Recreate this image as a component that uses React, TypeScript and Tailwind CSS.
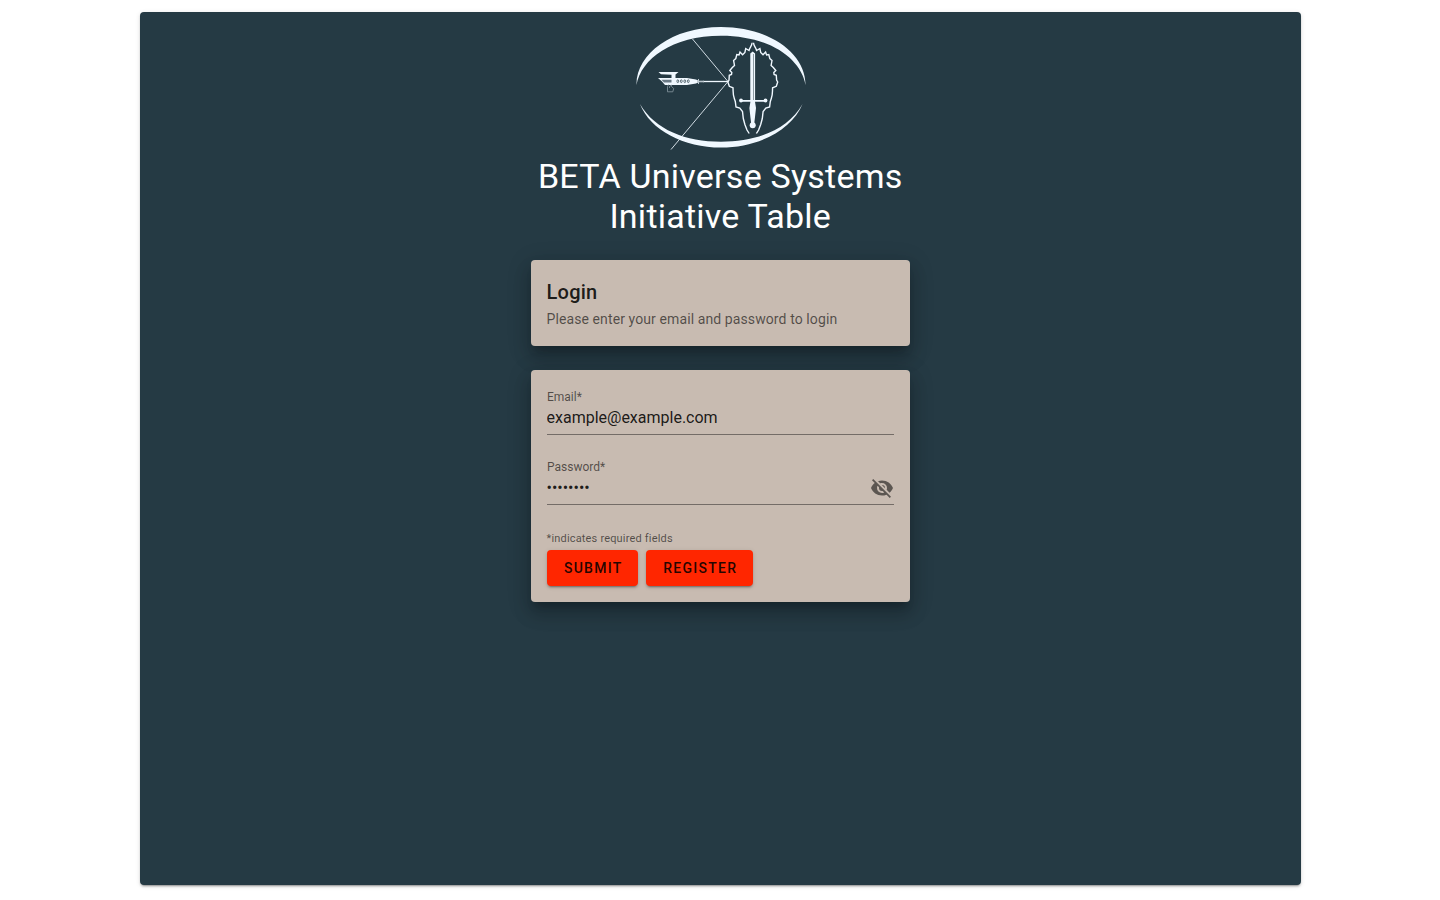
import { useState } from "react";

const flameLeft =
  "M752.1 42.8C751.9 46 750 47 749 50.500L745.700 48.500L744.900 52.500L742.600 54.800L740 52L739 55L736.800 54.500L735.800 58.500L733.600 60.500L734.500 65.500L732.300 67.500L729.800 70.500L731.800 72.500L731.500 74.500L729.300 75.300L729 80L727.900 82L729.300 86.300L733 87.800C733.300 92 732.700 94 734.300 98.500L735.300 101.500L736 107L739.800 108L742.500 111.500L743.300 118.500L744.900 124.500L747 130L749.200 133.500";

function Logo() {
  return (
    <svg className="block h-[128px] w-[172px]" viewBox="635 24 172 128" fill="none">
      <g fill="#f0f8ff">
        <path d="M636.5 85C636 54 672 27 721 27S806 54 805.5 85C801 59 770 35.7 721 35.7S641 59 636.5 85Z" />
        <path d="M640 104C650 130 684 147.6 721 147.6S792 130 802.500 104C788 130 756 141.700 721 141.700S655 130 640 104Z" />
        <path d="M658.500 72.100H678.500L675.500 74.500V78.100H687L696 79.500L700 81.500L696 83.500L687 85H665L662 81.500L658 78H671.500V74.700L661 74.200Z" />
        <path d="M750.300 53.500L752.7 51.500L755.100 53.500V100H766V101.800H755L756 108L754.900 118L754.300 123H751.100L750.500 118L749.400 108L750.400 101.800H740V100H750.300Z" />
        <circle cx="741" cy="100.500" r="1.900" />
        <circle cx="765.500" cy="100.500" r="1.900" />
        <circle cx="752.700" cy="125.300" r="3" />
      </g>
      <path d="M661.500 79.700H671.500V82.400H664Z" fill="#697985" />
      <path d="M753.500 54V100" stroke="#82919a" strokeWidth="0.900" />
      <path d="M703 81.500H728" stroke="#f0f8ff" strokeWidth="1.300" />
      <path d="M698.500 79V84" stroke="#bdc8d0" />
      <path d="M692.500 39L728 81.500L671 149.500" stroke="#f0f8ff" strokeWidth="0.850" />
      <path d="M697 81.500H704" stroke="#bdc8d0" strokeWidth="1.600" />
      <g stroke="#253a44" strokeWidth="0.700">
        <ellipse cx="677.800" cy="81.200" rx="0.900" ry="1.400" />
        <ellipse cx="681.300" cy="81.200" rx="0.900" ry="1.400" />
        <ellipse cx="684.800" cy="81.200" rx="0.900" ry="1.400" />
        <ellipse cx="688.300" cy="81.200" rx="0.900" ry="1.400" />
      </g>
      <path d="M668.500 84.500L667.500 86.500V91.800H672.800L673.700 88.500L671.500 86.500V85L669.500 86.500V88" stroke="#8998a1" strokeWidth="0.800" />
      <g stroke="#f0f8ff" strokeWidth="1.400">
        <path d={flameLeft} />
        <path d={flameLeft} transform="translate(1505.600 0) scale(-1 1)" />
      </g>
    </svg>
  );
}

export default function App() {
  const [email, setEmail] = useState("example@example.com");
  const [password, setPassword] = useState("password");
  const [visible, setVisible] = useState(false);
  return (
    <div className="h-[900px] bg-white pt-3 pl-[140px] font-[Roboto,sans-serif] text-black/87">
      <main className="flex h-[873px] w-[1161px] flex-col items-center rounded bg-[#253a44] pt-3 shadow-[0_3px_1px_-2px_rgba(0,0,0,.2),0_2px_2px_0_rgba(0,0,0,.14),0_1px_5px_0_rgba(0,0,0,.12)]">
        <Logo />
        <h1 className="mt-1 mr-[0.5px] text-center text-[34px] leading-10 tracking-[.007em] text-white">
          BETA Universe Systems
          <br />
          Initiative Table
        </h1>
        <section className="mt-6 h-[86px] w-[379px] rounded bg-[#c8bbb1] px-[15.5px] pt-4 shadow-[0_7px_8px_-4px_rgba(0,0,0,.2),0_12px_17px_2px_rgba(0,0,0,.14),0_5px_22px_4px_rgba(0,0,0,.12)]">
          <h2 className="text-xl leading-8 font-medium tracking-[.0125em]">Login</h2>
          <p className="text-sm leading-[22px] tracking-[.0071428571em] text-black/60">
            Please enter your email and password to login
          </p>
        </section>
        <form
          onSubmit={(e) => e.preventDefault()}
          className="mt-6 h-[232px] w-[379px] rounded bg-[#c8bbb1] px-4 pt-4 shadow-[0_7px_8px_-4px_rgba(0,0,0,.2),0_12px_17px_2px_rgba(0,0,0,.14),0_5px_22px_4px_rgba(0,0,0,.12)]"
        >
          <label className="block h-[49px] border-b border-black/42">
            <span className="block h-[22px] pt-px text-xs leading-5 text-black/60">Email*</span>
            <input
              className="-ml-[0.5px] block h-5 w-full text-base leading-5 outline-none"
              value={email}
              onChange={(e) => setEmail(e.target.value)}
            />
          </label>
          <div className="mt-[21px] flex h-[49px] border-b border-black/42">
            <label className="block grow">
              <span className="block h-[22px] pt-px text-xs leading-5 text-black/60">Password*</span>
              <input
                type={visible ? "text" : "password"}
                className="-ml-[0.5px] block h-5 w-full text-base leading-5 outline-none"
                value={password}
                onChange={(e) => setPassword(e.target.value)}
              />
            </label>
            <button
              type="button"
              aria-label="Toggle password"
              onClick={() => setVisible(!visible)}
              className="mt-5 mr-[0.5px] size-6 text-black/54"
            >
              <svg viewBox="0 0 24 24" className="size-6" fill="currentColor">
                <path d="M11.83,9L15,12.16C15,12.11 15,12.05 15,12A3,3 0 0,0 12,9C11.94,9 11.89,9 11.83,9M7.53,9.8L9.08,11.35C9.03,11.56 9,11.77 9,12A3,3 0 0,0 12,15C12.22,15 12.44,14.97 12.65,14.92L14.2,16.47C13.53,16.8 12.79,17 12,17A5,5 0 0,1 7,12C7,11.21 7.2,10.47 7.53,9.8M2,4.27L4.28,6.55L4.73,7C3.08,8.3 1.78,10 1,12C2.73,16.39 7,19.5 12,19.5C13.55,19.5 15.03,19.2 16.38,18.66L16.81,19.08L19.73,22L21,20.73L3.27,3M12,7A5,5 0 0,1 17,12C17,12.64 16.87,13.26 16.64,13.82L19.57,16.75C21.07,15.5 22.27,13.86 23,12C21.27,7.61 17,4.5 12,4.5C10.6,4.5 9.26,4.75 8,5.2L10.17,7.35C10.74,7.13 11.35,7 12,7Z" />
              </svg>
            </button>
          </div>
          <p className="mt-6 -ml-[0.5px] h-[21px] text-[11px] leading-5 tracking-[.016em] text-black/60">
            *indicates required fields
          </p>
          <div className="flex gap-2">
            <button className="h-9 w-[91px] rounded bg-[#ff2600] pl-[1.5px] text-sm font-medium tracking-[.0892857143em] shadow-[0_3px_1px_-2px_rgba(0,0,0,.2),0_2px_2px_0_rgba(0,0,0,.14),0_1px_5px_0_rgba(0,0,0,.12)]">
              SUBMIT
            </button>
            <button
              type="button"
              className="h-9 w-[107px] rounded bg-[#ff2600] pl-[1.5px] text-sm font-medium tracking-[.0892857143em] shadow-[0_3px_1px_-2px_rgba(0,0,0,.2),0_2px_2px_0_rgba(0,0,0,.14),0_1px_5px_0_rgba(0,0,0,.12)]"
            >
              REGISTER
            </button>
          </div>
        </form>
      </main>
    </div>
  );
}
